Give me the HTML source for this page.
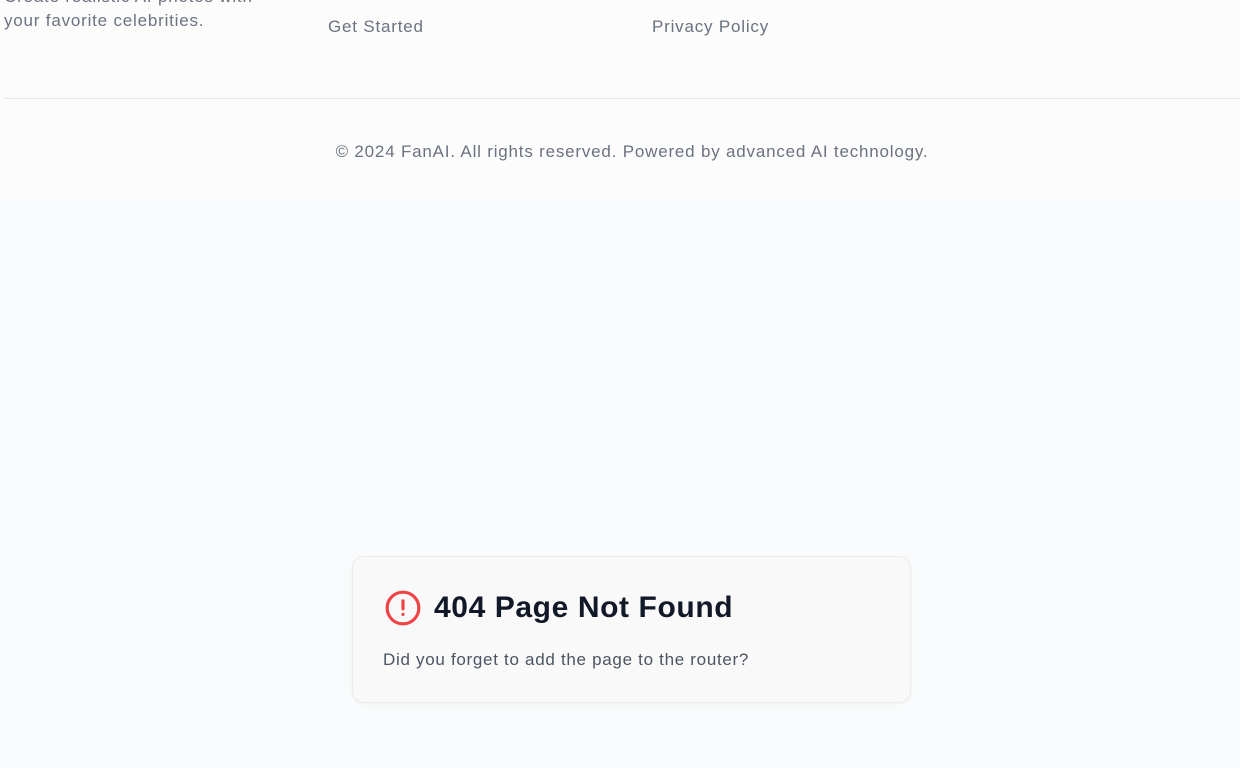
<!DOCTYPE html>
<html><head><meta charset="utf-8"><style>
body{margin:0;width:1240px;height:768px;overflow:hidden;background:#f9fafb;font-family:"Liberation Sans",sans-serif;position:relative}
.foot{position:absolute;left:0;top:0;width:1240px;height:200px;background:#fcfcfc}
.t{position:absolute;font-size:17px;letter-spacing:.8px;line-height:24px;color:#6b7280;white-space:nowrap}
.line{position:absolute;left:4px;right:0;top:98px;height:1px;background:#e5e7eb}
.card{position:absolute;left:352px;top:556px;width:559px;height:147px;box-sizing:border-box;border:1px solid #ececec;border-radius:12px;background:#f9f9f9;box-shadow:0 1px 2px rgba(0,0,0,.05)}
h1{position:absolute;left:81px;top:31px;margin:0;font-size:30px;letter-spacing:.6px;line-height:40px;font-weight:bold;color:#111827;white-space:nowrap}
p{position:absolute;left:30px;top:91px;margin:0;font-size:17px;letter-spacing:.7px;line-height:24px;color:#4b5563;white-space:nowrap}
svg{position:absolute;left:31px;top:32px}
</style></head><body>
<div class="foot">
<div class="t" style="left:4px;top:-15px">Create realistic AI photos with</div>
<div class="t" style="left:4px;top:9px">your favorite celebrities.</div>
<div class="t" style="left:328px;top:-21px">Pricing</div>
<div class="t" style="left:328px;top:15px">Get Started</div>
<div class="t" style="left:652px;top:-21px">Terms</div>
<div class="t" style="left:652px;top:15px">Privacy Policy</div>
<div class="line"></div>
<div class="t" style="left:0;width:1264px;text-align:center;top:140px">© 2024 FanAI. All rights reserved. Powered by advanced AI technology.</div>
</div>
<div class="card">
<svg width="38" height="38" viewBox="0 0 24 24" fill="none" stroke="#ef4444" stroke-width="2" stroke-linecap="round"><circle cx="12" cy="12" r="10"/><line x1="12" y1="7.5" x2="12" y2="12.5"/><line x1="12" y1="16" x2="12.01" y2="16"/></svg>
<h1>404 Page Not Found</h1>
<p>Did you forget to add the page to the router?</p>
</div>
</body></html>
